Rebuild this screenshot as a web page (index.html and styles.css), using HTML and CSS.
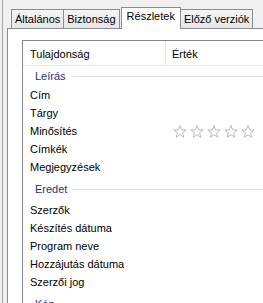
FILE: index.html
```html
<!DOCTYPE html>
<html>
<head>
    <title>Részletek</title>
    <link rel="stylesheet" href="styles.css">
</head>
<body>

<svg width="0" height="0" class="defs">
    <symbol id="star" viewBox="0 0 14 13">
        <polygon points="7,0.5 8.59,4.82 13.18,4.99 9.57,7.83 10.82,12.26 7,9.7 3.18,12.26 4.43,7.83 0.82,4.99 5.41,4.82"/>
    </symbol>
</svg>

<div class="window">
    <!-- Tab strip -->
    <div class="tabs">
        <div class="tab">Általános</div>
        <div class="tab">Biztonság</div>
        <div class="tab active">Részletek</div>
        <div class="tab">Előző verziók</div>
    </div>

    <!-- Details page -->
    <div class="panel">
        <div class="list">
            <div class="list-header">
                <div class="col-name">Tulajdonság</div>
                <div class="col-value">Érték</div>
            </div>

            <div class="group first"><span>Leírás</span><i></i></div>
            <div class="row"><div class="col-name">Cím</div></div>
            <div class="row"><div class="col-name">Tárgy</div></div>
            <div class="row">
                <div class="col-name">Minősítés</div>
                <div class="col-value stars">
                    <svg><use href="#star"/></svg>
                    <svg><use href="#star"/></svg>
                    <svg><use href="#star"/></svg>
                    <svg><use href="#star"/></svg>
                    <svg><use href="#star"/></svg>
                </div>
            </div>
            <div class="row"><div class="col-name">Címkék</div></div>
            <div class="row"><div class="col-name">Megjegyzések</div></div>

            <div class="group"><span>Eredet</span><i></i></div>
            <div class="row"><div class="col-name">Szerzők</div></div>
            <div class="row"><div class="col-name">Készítés dátuma</div></div>
            <div class="row"><div class="col-name">Program neve</div></div>
            <div class="row"><div class="col-name">Hozzájutás dátuma</div></div>
            <div class="row"><div class="col-name">Szerzői jog</div></div>

            <div class="group"><span>Kép</span><i></i></div>
        </div>
    </div>
</div>

</body>
</html>
```

FILE: styles.css
```css
/* General */
body {
    margin: 0;
    padding-left: 2px;
    height: 303px;
    overflow: hidden;
    background-color: #f0f0f0;
    font-family: "Liberation Sans", Arial, sans-serif;
    font-size: 11px;
    color: #000;
}

.defs {
    position: absolute;
}

.window {
    height: 100%;
    border-left: 1px solid #a7a7a7;
    padding-left: 4px;
}

/* Tabs */
.tabs {
    display: flex;
    align-items: flex-end;
    padding: 7px 0 0 4px;
    height: 21px;
}

.tab {
    height: 19px;
    line-height: 18px;
    padding: 0 3px;
    margin-left: -1px;
    border: 1px solid #898c95;
    border-bottom: none;
    box-sizing: border-box;
    background: linear-gradient(#f4f4f4, #e6e6e6);
    white-space: nowrap;
}

.tab:first-child {
    margin-left: 0;
}

.tab.active {
    position: relative;
    z-index: 1;
    height: 22px;
    line-height: 17px;
    margin: 0 -1px -1px 1px;
    padding: 0 5px;
    background: #fff;
}

.tab.active + .tab {
    margin-left: 0;
}

/* Page */
.panel {
    background-color: #fff;
    border-top: 1px solid #898c95;
    border-left: 1px solid #898c95;
    height: 100%;
    padding: 11px 0 0 14px;
}

.list {
    border-top: 1px solid #828790;
    border-left: 1px solid #828790;
    height: 100%;
}

.list-header {
    display: flex;
    height: 24px;
    line-height: 22px;
    border-bottom: 1px solid #e5e5e5;
}

.list-header > div {
    padding-top: 2px;
}

.list-header .col-name {
    border-right: 1px solid #e5e5e5;
}

.col-name {
    width: 143px;
    box-sizing: border-box;
    padding-left: 7px;
    flex-shrink: 0;
}

.col-value {
    padding-left: 6px;
}

.row {
    display: flex;
    height: 18px;
    line-height: 18px;
}

.stars {
    display: flex;
    align-items: center;
    gap: 3px;
    padding-left: 7px;
}

.stars svg {
    width: 14px;
    height: 13px;
    fill: #fff;
    stroke: #b3b3b3;
    stroke-width: 0.9;
}

/* Group headers */
.group {
    display: flex;
    align-items: center;
    line-height: 18px;
    padding: 4px 0 3px 12px;
    color: #1e3287;
}

.group.first {
    padding: 1px 0 1px 12px;
}

.group i {
    flex: 1;
    height: 1px;
    margin-left: 5px;
    background-color: #dde2ec;
}
```
